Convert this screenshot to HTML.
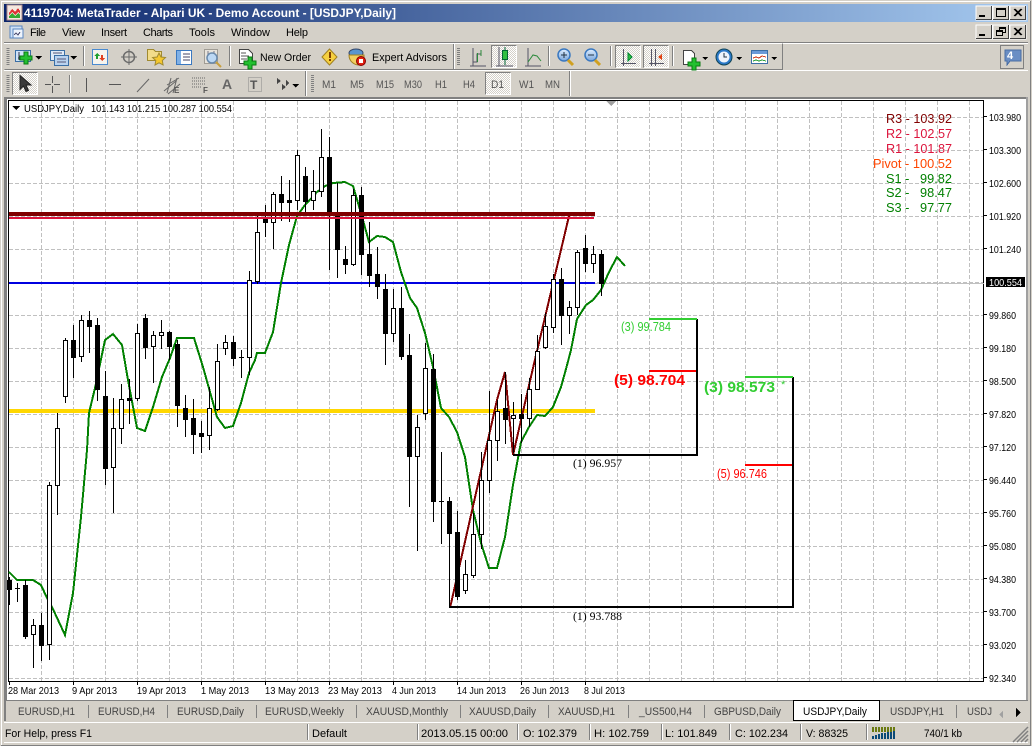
<!DOCTYPE html>
<html><head><meta charset="utf-8"><title>MetaTrader</title>
<style>
html,body{margin:0;padding:0;width:1032px;height:746px;overflow:hidden;background:#d4d0c8}
svg{display:block}
text{font-family:"Liberation Sans",sans-serif;font-size:11px;fill:#000;white-space:pre}
.s{fill:#444}
.y{font-family:"Liberation Serif",serif;font-size:12px}
.p{font-size:13px}
.b{font-size:14.5px;font-weight:bold}
.g{font-size:11px;fill:#555}
.t{font-size:10.5px}
</style></head><body>
<svg width="1032" height="746" viewBox="0 0 1032 746" xmlns="http://www.w3.org/2000/svg">
<defs>
<linearGradient id="tb" x1="0" x2="1" y1="0" y2="0"><stop offset="0" stop-color="#0a246a"/><stop offset="1" stop-color="#a6caf0"/></linearGradient>
<pattern id="ck" width="2" height="2" patternUnits="userSpaceOnUse"><rect width="2" height="2" fill="#fff"/><rect width="1" height="1" fill="#d4d0c8"/><rect x="1" y="1" width="1" height="1" fill="#d4d0c8"/></pattern>
<linearGradient id="bl" x1="0" x2="0" y1="0" y2="1"><stop offset="0" stop-color="#dfeeff"/><stop offset="1" stop-color="#7aa6dc"/></linearGradient>
</defs>
<rect width="1032" height="746" fill="#d4d0c8"/>
<rect x="1" y="1" width="1030" height="1" fill="#fff"/>
<rect x="1" y="1" width="1" height="744" fill="#fff"/>
<rect x="1030" y="1" width="1" height="744" fill="#808080"/>
<rect x="1" y="745" width="1030" height="1" fill="#808080"/>
<!-- title -->
<rect x="4" y="4" width="1024" height="18" fill="url(#tb)"/>
<g shape-rendering="crispEdges">
<rect x="7" y="5" width="15" height="15" fill="#f4e8e0" stroke="#a88" stroke-width="1"/>
<path d="M9 13l3-4 3 3 3-4 2 3v3l-2-2-3 3-3-3-3 3z" fill="#d33"/><path d="M9 16l3-3 3 3 3-3 2 2v3H9z" fill="#3a3"/>
</g>
<text x="24" y="17" style="font-size:12px;font-weight:bold;fill:#fff" textLength="372" lengthAdjust="spacingAndGlyphs">4119704: MetaTrader - Alpari UK - Demo Account - [USDJPY,Daily]</text>
<g shape-rendering="crispEdges">
<rect x="976" y="6" width="16" height="14" fill="#d4d0c8" stroke="#fff"/><path d="M991.5 6v14M976 19.5h16" stroke="#404040" fill="none"/><rect x="979" y="15" width="6" height="2" fill="#000"/>
<rect x="993" y="6" width="16" height="14" fill="#d4d0c8" stroke="#fff"/><path d="M1008.5 6v14M993 19.5h16" stroke="#404040" fill="none"/><rect x="996.5" y="8.5" width="9" height="8" fill="none" stroke="#000"/><rect x="996" y="8" width="10" height="2" fill="#000"/>
<rect x="1010" y="6" width="16" height="14" fill="#d4d0c8" stroke="#fff"/><path d="M1025.5 6v14M1010 19.5h16" stroke="#404040" fill="none"/><path d="M1014 9l7 7m0-7l-7 7M1015 9l7 7m0-7l-7 7" stroke="#000" fill="none" shape-rendering="auto"/>
<rect x="976" y="25" width="16" height="14" fill="#d4d0c8" stroke="#fff"/><path d="M991.5 25v14M976 38.5h16" stroke="#404040" fill="none"/><rect x="979" y="34" width="6" height="2" fill="#000"/>
<rect x="993" y="25" width="16" height="14" fill="#d4d0c8" stroke="#fff"/><path d="M1008.5 25v14M993 38.5h16" stroke="#404040" fill="none"/><rect x="999.5" y="27.5" width="6" height="5" fill="none" stroke="#000"/><rect x="996.5" y="30.5" width="6" height="5" fill="#d4d0c8" stroke="#000"/><rect x="996" y="30" width="7" height="2" fill="#000"/><rect x="999" y="27" width="7" height="2" fill="#000"/>
<rect x="1010" y="25" width="16" height="14" fill="#d4d0c8" stroke="#fff"/><path d="M1025.5 25v14M1010 38.5h16" stroke="#404040" fill="none"/><path d="M1014 28l7 7m0-7l-7 7M1015 28l7 7m0-7l-7 7" stroke="#000" fill="none" shape-rendering="auto"/>
<!-- menu icon -->
<rect x="10" y="26" width="12" height="12" fill="#cfe0f5" stroke="#5a86c0"/><rect x="13" y="29" width="10" height="9" fill="#eef4fc" stroke="#5a86c0"/><path d="M14 35l2-2 2 2 2-3" stroke="#557" fill="none"/>
<rect x="4" y="42" width="1024" height="1" fill="#808080"/><rect x="4" y="43" width="1024" height="1" fill="#fff"/>
</g>
<text x="30" y="36" textLength="16">File</text>
<text x="62" y="36" textLength="23">View</text>
<text x="101" y="36" textLength="26">Insert</text>
<text x="143" y="36" textLength="30">Charts</text>
<text x="189" y="36" textLength="26">Tools</text>
<text x="231" y="36" textLength="39">Window</text>
<text x="286" y="36" textLength="22">Help</text>
<!-- toolbar frames -->
<g shape-rendering="crispEdges" fill="none">
<path d="M4.5 69.5H782.5V43.5" stroke="#808080"/><path d="M453.5 44V69" stroke="#808080"/><path d="M454.5 44V69" stroke="#fff"/>
<path d="M4 70.5H1028" stroke="#fff"/>
<path d="M305.5 71V96" stroke="#808080"/><path d="M306.5 71V96" stroke="#fff"/><path d="M569.5 71V96" stroke="#808080"/><path d="M570.5 71V96" stroke="#fff"/>
<path d="M8 48V66" stroke="#808080" stroke-dasharray="1 1" stroke-width="3"/>
<path d="M458.5 48V66" stroke="#808080" stroke-dasharray="1 1" stroke-width="3"/>
<path d="M8 75V93" stroke="#808080" stroke-dasharray="1 1" stroke-width="3"/>
<path d="M312.5 75V93" stroke="#808080" stroke-dasharray="1 1" stroke-width="3"/>
<path d="M83.5 46V66M229.5 46V66M548.5 46V66M610.5 46V66M672.5 46V66M69.5 75V93" stroke="#808080"/>
<path d="M84.5 46V66M230.5 46V66M549.5 46V66M611.5 46V66M673.5 46V66M70.5 75V93" stroke="#fff"/>
<!-- pressed -->
<rect x="491" y="45" width="26" height="23" fill="url(#ck)"/><path d="M491.500 67.500V45.500H516.500" stroke="#808080"/><path d="M516.500 46V67.500H492" stroke="#fff"/>
<rect x="615" y="45" width="26" height="23" fill="url(#ck)"/><path d="M615.500 67.500V45.500H640.500" stroke="#808080"/><path d="M640.500 46V67.500H616" stroke="#fff"/>
<rect x="643" y="45" width="26" height="23" fill="url(#ck)"/><path d="M643.500 67.500V45.500H668.500" stroke="#808080"/><path d="M668.500 46V67.500H644" stroke="#fff"/>
<rect x="12" y="72" width="26" height="23" fill="url(#ck)"/><path d="M12.500 94.500V72.500H37.500" stroke="#808080"/><path d="M37.500 73V94.500H13" stroke="#fff"/>
<rect x="485" y="72" width="26" height="23" fill="url(#ck)"/><path d="M485.500 94.500V72.500H510.500" stroke="#808080"/><path d="M510.500 73V94.500H486" stroke="#fff"/>
<!-- new chart -->
<rect x="15.5" y="50.5" width="15" height="11" fill="#cfe2f8" stroke="#3a6ea5"/>
<path d="M19 52v8M18 58h6" stroke="#334"/>
<path d="M24 52h4v4h4v4h-4v4h-4v-4h-4v-4h4z" fill="#22c030" stroke="#0a7a12"/>
<path d="M35 56h7l-3.5 3.5z" fill="#000" stroke="none"/>
<!-- profiles -->
<rect x="50.5" y="50.5" width="14" height="10" fill="#dfeaf7" stroke="#3a6ea5"/>
<rect x="54.5" y="55.5" width="14" height="10" fill="#b9d2ef" stroke="#3a6ea5"/>
<path d="M53 53h9M57 59h9M57 62h9" stroke="#557"/>
<path d="M70 56h7l-3.5 3.500z" fill="#000" stroke="none"/>
<!-- market watch -->
<rect x="92.5" y="49.5" width="15" height="15" fill="#f6f4ee" stroke="#4a8ad0"/>
<path d="M97 53l-3 3h2v3h2v-3h2z" fill="#20a030" stroke="none"/><path d="M102 61l3-3h-2v-3h-2v3h-2z" fill="#e04020" stroke="none"/>
<!-- crosshair -->
<circle cx="129" cy="57" r="5.5" stroke="#6a6a6a" stroke-width="1.5" shape-rendering="auto"/>
<path d="M129 49v16M121 57h16" stroke="#6a6a6a"/>
<!-- folder star -->
<path d="M147.5 49.5h6l2 2h6v9h-14z" fill="#f2dc8a" stroke="#a08a30"/>
<path d="M159 53l2 4 4.500 .5-3.200 3 .8 4.500-4.100-2.200-4 2.200 .8-4.500-3.200-3 4.500-.5z" fill="#f5c830" stroke="#a08a30" shape-rendering="auto"/>
<!-- navigator -->
<rect x="176.500" y="50.500" width="15" height="14" fill="#fff" stroke="#3a78c0"/><rect x="177" y="51" width="4" height="13" fill="#7fb0e6"/><path d="M183 54h7M183 57h7M183 60h7" stroke="#446"/>
<!-- tester -->
<rect x="204.500" y="49.500" width="13" height="14" fill="#e8e4dc" stroke="#a09c94"/><path d="M208 51v10M211 53v6M214 51v8" stroke="#778"/>
<circle cx="212" cy="58" r="5" fill="#bcd8f4" stroke="#6a8aac" stroke-width="1.500" shape-rendering="auto"/><path d="M216 62l5 5" stroke="#c8a040" stroke-width="2" shape-rendering="auto"/>
<!-- new order -->
<path d="M239.500 49.500h9l4 4v10h-13z" fill="#fff" stroke="#444"/><path d="M241 53h5M241 56h8M241 59h6" stroke="#555"/>
<path d="M248 57h4v4h4v4h-4v4h-4v-4h-4v-4h4z" fill="#22c030" stroke="#0a7a12"/>
<!-- warning -->
<path d="M329.500 49l7.500 8-7.500 8-7.500-8z" fill="#f6d040" stroke="#a08020" shape-rendering="auto"/><rect x="329" y="52" width="2" height="6" fill="#804000"/><rect x="329" y="59" width="2" height="2" fill="#804000"/>
<!-- EA hat -->
<ellipse cx="356" cy="53" rx="7" ry="4" fill="#5a96d0" stroke="#346" shape-rendering="auto"/><path d="M349 55c0 7 6 10 10 10l5-3v-7z" fill="#f2d060" stroke="#a08020" shape-rendering="auto"/>
<circle cx="361" cy="61" r="4.500" fill="#e02010" stroke="#800" shape-rendering="auto"/><rect x="359" y="59" width="4" height="4" fill="#fff"/>
<!-- chart types -->
<path d="M470 66h16M473 48v18M473 62h4v-8h4v-4" stroke="#556" /><path d="M477.500 62v-9M481 50v6" stroke="#2a8a3a"/>
<path d="M496 66h17M499 47v19" stroke="#556"/><path d="M505 47v18" stroke="#063"/><rect x="502.500" y="50.500" width="5" height="9" fill="#30c040" stroke="#063"/>
<path d="M525 66h16M528 48v18" stroke="#556"/><path d="M528 62l5-7 4 1 4 5" stroke="#2a8a3a" shape-rendering="auto"/>
<!-- zoom in/out -->
<circle cx="564" cy="55" r="6" fill="url(#bl)" stroke="#3a78c0" stroke-width="1.500" shape-rendering="auto"/><path d="M561 55h6M564 52v6" stroke="#234"/><path d="M568 60l5 5" stroke="#d0a020" stroke-width="3" shape-rendering="auto"/>
<circle cx="591" cy="55" r="6" fill="url(#bl)" stroke="#3a78c0" stroke-width="1.500" shape-rendering="auto"/><path d="M588 55h6" stroke="#234"/><path d="M595 60l5 5" stroke="#d0a020" stroke-width="3" shape-rendering="auto"/>
<!-- shift / autoscroll -->
<path d="M621 63.500h15M623.500 49v17" stroke="#556"/><path d="M628 53l4 4-4 4z" fill="#30c040" stroke="#083"/>
<path d="M649 63.500h15M651.500 49v17M655.500 49v17" stroke="#556"/><path d="M658 57l4-3v6z" fill="#e04010" stroke="none"/>
<!-- indicators -->
<path d="M683.500 50.500h8l3 3v11h-11z" fill="#fff" stroke="#444"/>
<path d="M692 58h4v4h4v4h-4v4h-4v-4h-4v-4h4z" fill="#22c030" stroke="#0a7a12"/>
<path d="M702 57h6l-3 3z" fill="#000" stroke="none"/>
<circle cx="724" cy="57" r="8" fill="#2a78c8" stroke="#145" shape-rendering="auto"/><circle cx="724" cy="57" r="5.500" fill="#eef4fc" shape-rendering="auto"/><path d="M724 53v4h3" stroke="#234"/>
<path d="M736 57h6l-3 3z" fill="#000" stroke="none"/>
<rect x="751.500" y="50.500" width="16" height="13" fill="#fff" stroke="#3a6ea5"/><rect x="752" y="51" width="15" height="3" fill="#6a9ad8"/><path d="M753 58l3-1 3 1 3-2 4 1" stroke="#d04020"/><path d="M753 61l3-1 3 1 3-1 4 1" stroke="#30a040"/>
<path d="M771 57h6l-3 3z" fill="#000" stroke="none"/>
<!-- cursor -->
<path d="M20 75.500v14l3.500-3.500 2.500 5.500 2.500-1-2.500-5.500h5z" fill="#3a3a3a" stroke="#222" shape-rendering="auto"/>
<path d="M52.500 76v7M52.500 86v7M45 84.500h6M54 84.500h6" stroke="#555"/>
<path d="M86.500 78v14" stroke="#555"/><path d="M109 84.500h12" stroke="#555"/>
<path d="M137 92l12-13" stroke="#666" shape-rendering="auto"/>
<path d="M164 91l12-10M167 85l12-7M168 94l12-10M171 78l-4 15M177 78l-4 15" stroke="#666" shape-rendering="auto"/>
<path d="M192 78h14M192 81h14M192 84h14M192 87h10" stroke="#666" stroke-dasharray="1 1"/>
<rect x="248.500" y="77.500" width="13" height="14" stroke="#888" stroke-dasharray="1 1"/>
<path d="M277 78l4 3-4 3zM282 84l4 3-4 3z" fill="#444" stroke="none"/><path d="M286 80l3 3-3 3z" fill="#444" stroke="none"/>
<path d="M292 84h7l-3.500 3.500z" fill="#000" stroke="none"/>
<!-- chat icon box -->
<rect x="1000.500" y="45.500" width="23" height="23" fill="#d4d0c8" stroke="#808080"/>
<path d="M1005 50h16v11h-11l-3 4v-4h-2z" fill="#6a8ec4" stroke="#4a6ea4"/>
</g>
<text x="260" y="61" textLength="51" lengthAdjust="spacingAndGlyphs">New Order</text>
<text x="372" y="61" textLength="75" lengthAdjust="spacingAndGlyphs">Expert Advisors</text>
<text x="203" y="93" class="g" style="font-size:8px;font-weight:bold" textLength="5">F</text>
<text x="174" y="93" class="g" style="font-size:8px;font-weight:bold" textLength="5">E</text>
<text x="222" y="89" style="font-size:14px;font-weight:bold;fill:#666" textLength="10">A</text>
<text x="250" y="89" style="font-size:12px;font-weight:bold;fill:#555" textLength="9">T</text>
<text x="322" y="88" class="g" textLength="14" lengthAdjust="spacingAndGlyphs">M1</text>
<text x="350" y="88" class="g" textLength="14" lengthAdjust="spacingAndGlyphs">M5</text>
<text x="376" y="88" class="g" textLength="18" lengthAdjust="spacingAndGlyphs">M15</text>
<text x="404" y="88" class="g" textLength="18" lengthAdjust="spacingAndGlyphs">M30</text>
<text x="435" y="88" class="g" textLength="12" lengthAdjust="spacingAndGlyphs">H1</text>
<text x="463" y="88" class="g" textLength="12" lengthAdjust="spacingAndGlyphs">H4</text>
<text x="491" y="88" class="g" textLength="13" lengthAdjust="spacingAndGlyphs">D1</text>
<text x="519" y="88" class="g" textLength="15" lengthAdjust="spacingAndGlyphs">W1</text>
<text x="545" y="88" class="g" textLength="15" lengthAdjust="spacingAndGlyphs">MN</text>
<text x="1007" y="59" style="font-size:11px;font-weight:bold;fill:#fff" textLength="7">4</text>
<!-- chart frame -->
<g shape-rendering="crispEdges">
<rect x="4" y="97" width="1024" height="2" fill="#808080"/>
<rect x="4" y="97" width="3" height="603" fill="#808080"/>
<rect x="1026" y="97" width="2" height="603" fill="#a0a0a0"/>
<rect x="7" y="99" width="1019" height="601" fill="#fff"/>
<path d="M8.500 100.500H983.500V681.500H8.500z" fill="none" stroke="#000"/>
<!-- grid -->
<path d="M41.500 101V681M73.500 101V681M105.500 101V681M137.500 101V681M169.500 101V681M201.500 101V681M233.500 101V681M265.500 101V681M297.500 101V681M329.500 101V681M361.500 101V681M393.500 101V681M425.500 101V681M457.500 101V681M489.500 101V681M521.500 101V681M553.500 101V681M585.500 101V681M617.500 101V681M649.500 101V681M681.500 101V681M713.500 101V681M745.500 101V681M777.500 101V681M809.500 101V681M841.500 101V681M873.500 101V681M905.500 101V681M937.500 101V681M969.500 101V681" stroke="#c0c0c0" stroke-dasharray="4 2" fill="none"/>
<path d="M9 117.500H983M9 150.500H983M9 183.500H983M9 216.500H983M9 249.500H983M9 282.500H983M9 315.500H983M9 348.500H983M9 381.500H983M9 414.500H983M9 447.500H983M9 480.500H983M9 513.500H983M9 546.500H983M9 579.500H983M9 612.500H983M9 645.500H983M9 678.500H983" stroke="#c0c0c0" stroke-dasharray="4 2" fill="none"/>
<!-- shift marker -->
<path d="M606 101h10l-5 5z" fill="#a0a0a0"/>
<!-- price line -->
<rect x="595" y="283" width="389" height="1" fill="#c0c0c0"/>
<!-- hlines under candles -->
<rect x="9" y="282" width="586" height="2" fill="#0000e0"/>
<rect x="9" y="409" width="586" height="4" fill="#ffd700"/>
<!-- MA -->
<path d="M9 572L17 580H33L41 585L47 598L52 607L65 635L73 593L81 517L87 450L89 413L95 388L105 340L113 334L122 345L128 380L137 428L145 431L153 407L162 377L170 358L177 338H194L203 367L217 417L225 428L233 426L241 403L249 373L255 360L257 353H265L273 332L281 283L289 245L297 216L305 205L317 192L325 186L333 183L345 182L353 186L361 213L369 242L377 236L385 237L393 242L401 272L410 298L417 308L425 333L433 367L441 408L449 417L457 432L465 457L473 510L481 543L489 568H497L505 537L513 485L521 442L529 427L537 415L545 416L553 407L561 387L566 369L571 350L577 319L586 305L593 300L601 290L609 272L617 257L625 266" fill="none" stroke="#008000" stroke-width="2"/>
<!-- zigzag -->
<path d="M450 608L497 400L505 372L513 455L533 368L569 216" fill="none" stroke="#800000" stroke-width="2"/>
<!-- wicks -->
<path d="M9.500 577V605M17.500 583V602M25.500 580V639M33.500 619V668M41.500 613V661M49.500 482V660M57.500 413V515M65.500 338V403M73.500 325V378M81.500 315V362M89.500 311V353M97.500 318V401M105.500 371V485M113.500 398V513M121.500 384V444M129.500 379V424M137.500 324V401M145.500 314V359M153.500 331V383M161.500 320V349M169.500 331V360M177.500 340V427M185.500 395V437M193.500 399V454M201.500 421V453M209.500 387V450M217.500 344V411M225.500 335V355M233.500 336V366M241.500 350V378M249.500 271V375M257.500 213V284M265.500 205V237M273.500 192V249M281.500 176V221M289.500 180V222M297.500 150V210M305.500 167V212M313.500 170V210M321.500 129V197M329.500 137V270M337.500 183V278M345.500 246V274M353.500 189V266M361.500 187V275M369.500 222V287M377.500 247V299M385.500 274V365M393.500 289V342M401.500 287V360M409.500 334V507M417.500 415V551M425.500 343V420M433.500 354V522M441.500 452V544M449.500 497V608M457.500 511V600M465.500 560V594M473.500 513V578M481.500 452V549M489.500 391V493M497.500 400V461M505.500 372V444M513.500 402V453M521.500 394V443M529.500 378V427M537.500 335V389M545.500 313V349M553.500 274V333M561.500 268V345M569.500 301V334M577.500 250V315M585.500 235V272M593.500 246V273M601.500 250V296" stroke="#000" fill="none"/>
<!-- bear bodies -->
<path fill="#000" d="M7 580h5v10h-5zM15 588h5v1h-5zM23 585h5v52h-5zM39 625h5v21h-5zM71 340h5v18h-5zM87 320h5v7h-5zM95 325h5v65h-5zM103 396h5v73h-5zM127 398h5v3h-5zM143 318h5v30h-5zM167 332h5v15h-5zM175 344h5v62h-5zM183 408h5v12h-5zM191 418h5v17h-5zM199 433h5v4h-5zM231 342h5v17h-5zM239 357h5v1h-5zM263 218h5v5h-5zM279 194h5v9h-5zM287 200h5v3h-5zM303 176h5v26h-5zM327 157h5v57h-5zM335 213h5v37h-5zM343 259h5v6h-5zM359 195h5v60h-5zM367 254h5v22h-5zM375 274h5v13h-5zM383 289h5v45h-5zM399 308h5v49h-5zM407 355h5v102h-5zM431 369h5v133h-5zM439 501h5v1h-5zM447 501h5v33h-5zM455 532h5v65h-5zM503 408h5v12h-5zM519 414h5v5h-5zM559 279h5v37h-5zM583 248h5v16h-5zM599 254h5v30h-5z"/>
<!-- bull bodies -->
<path fill="#fff" stroke="#000" d="M31.500 625.500h4v9h-4zM47.500 485.500h4v159h-4zM55.500 428.500h4v57h-4zM63.500 340.500h4v56h-4zM79.500 320.500h4v36h-4zM111.500 428.500h4v39h-4zM119.500 399.500h4v29h-4zM135.500 333.500h4v65h-4zM151.500 335.500h4v11h-4zM159.500 332.500h4v3h-4zM207.500 408.500h4v27h-4zM215.500 361.500h4v48h-4zM223.500 342.500h4v6h-4zM247.500 280.500h4v77h-4zM255.500 232.500h4v49h-4zM271.500 194.500h4v28h-4zM295.500 155.500h4v45h-4zM311.500 191.500h4v9h-4zM319.500 157.500h4v34h-4zM351.500 195.500h4v69h-4zM391.500 308.500h4v25h-4zM415.500 427.500h4v29h-4zM423.500 368.500h4v45h-4zM463.500 574.500h4v16h-4zM471.500 534.500h4v41h-4zM479.500 480.500h4v54h-4zM487.500 440.500h4v40h-4zM495.500 411.500h4v29h-4zM511.500 415.500h4v3h-4zM527.500 389.500h4v29h-4zM535.500 351.500h4v38h-4zM543.500 326.500h4v21h-4zM551.500 279.500h4v48h-4zM567.500 307.500h4v8h-4zM575.500 252.500h4v55h-4zM591.500 254.500h4v9h-4z"/>
<!-- red lines on top -->
<rect x="9" y="212" width="586" height="4" fill="#800000"/>
<rect x="9" y="217" width="585" height="2" fill="#dc143c"/>
<!-- projection lines -->
<path d="M513 454h185v2H513zM696 319h2v137h-2zM450 606h344v2H450zM792 377h2v231h-2z" fill="#000"/>
<rect x="649" y="318" width="48" height="2" fill="#32cd32"/>
<rect x="649" y="370" width="47" height="2" fill="#ff0000"/>
<rect x="745" y="376" width="48" height="2" fill="#32cd32"/>
<rect x="745" y="464" width="47" height="2" fill="#ff0000"/>
<!-- ticks -->
<path d="M984 116.500h3M984 149.500h3M984 182.500h3M984 215.500h3M984 248.500h3M984 314.500h3M984 347.500h3M984 380.500h3M984 413.500h3M984 446.500h3M984 479.500h3M984 512.500h3M984 545.500h3M984 578.500h3M984 611.500h3M984 644.500h3M984 677.500h3" stroke="#000"/>
<path d="M9.500 682v3M73.500 682v3M137.500 682v3M201.500 682v3M265.500 682v3M329.500 682v3M393.500 682v3M457.500 682v3M521.500 682v3M585.500 682v3" stroke="#000"/>
<rect x="986" y="277" width="39" height="10" fill="#000"/>
<path d="M12 106h8l-4 4z" fill="#000"/>
</g>
<text x="24" y="112" class="t" textLength="60" lengthAdjust="spacingAndGlyphs">USDJPY,Daily</text>
<text x="91" y="112" class="t" textLength="141" lengthAdjust="spacingAndGlyphs">101.143 101.215 100.287 100.554</text>
<!-- price labels -->
<g>
<text class="t" x="989" y="121" textLength="32" lengthAdjust="spacingAndGlyphs">103.980</text>
<text class="t" x="989" y="154" textLength="32" lengthAdjust="spacingAndGlyphs">103.300</text>
<text class="t" x="989" y="187" textLength="32" lengthAdjust="spacingAndGlyphs">102.600</text>
<text class="t" x="989" y="220" textLength="32" lengthAdjust="spacingAndGlyphs">101.920</text>
<text class="t" x="989" y="253" textLength="32" lengthAdjust="spacingAndGlyphs">101.240</text>
<text class="t" x="989" y="286" textLength="33" lengthAdjust="spacingAndGlyphs" style="fill:#fff">100.554</text>
<text class="t" x="989" y="319" textLength="27" lengthAdjust="spacingAndGlyphs">99.860</text>
<text class="t" x="989" y="352" textLength="27" lengthAdjust="spacingAndGlyphs">99.180</text>
<text class="t" x="989" y="385" textLength="27" lengthAdjust="spacingAndGlyphs">98.500</text>
<text class="t" x="989" y="418" textLength="27" lengthAdjust="spacingAndGlyphs">97.820</text>
<text class="t" x="989" y="451" textLength="27" lengthAdjust="spacingAndGlyphs">97.120</text>
<text class="t" x="989" y="484" textLength="27" lengthAdjust="spacingAndGlyphs">96.440</text>
<text class="t" x="989" y="517" textLength="27" lengthAdjust="spacingAndGlyphs">95.760</text>
<text class="t" x="989" y="550" textLength="27" lengthAdjust="spacingAndGlyphs">95.080</text>
<text class="t" x="989" y="583" textLength="27" lengthAdjust="spacingAndGlyphs">94.380</text>
<text class="t" x="989" y="616" textLength="27" lengthAdjust="spacingAndGlyphs">93.700</text>
<text class="t" x="989" y="649" textLength="27" lengthAdjust="spacingAndGlyphs">93.020</text>
<text class="t" x="989" y="682" textLength="27" lengthAdjust="spacingAndGlyphs">92.340</text>
</g>
<!-- date labels -->
<text class="t" x="8" y="694" textLength="51" lengthAdjust="spacingAndGlyphs">28 Mar 2013</text>
<text class="t" x="72" y="694" textLength="45" lengthAdjust="spacingAndGlyphs">9 Apr 2013</text>
<text class="t" x="137" y="694" textLength="49" lengthAdjust="spacingAndGlyphs">19 Apr 2013</text>
<text class="t" x="201" y="694" textLength="48" lengthAdjust="spacingAndGlyphs">1 May 2013</text>
<text class="t" x="265" y="694" textLength="54" lengthAdjust="spacingAndGlyphs">13 May 2013</text>
<text class="t" x="328" y="694" textLength="54" lengthAdjust="spacingAndGlyphs">23 May 2013</text>
<text class="t" x="392" y="694" textLength="44" lengthAdjust="spacingAndGlyphs">4 Jun 2013</text>
<text class="t" x="457" y="694" textLength="49" lengthAdjust="spacingAndGlyphs">14 Jun 2013</text>
<text class="t" x="520" y="694" textLength="49" lengthAdjust="spacingAndGlyphs">26 Jun 2013</text>
<text class="t" x="584" y="694" textLength="41" lengthAdjust="spacingAndGlyphs">8 Jul 2013</text>
<!-- pivots -->
<text x="886" y="123" class="p" style="fill:#800000" textLength="66" lengthAdjust="spacingAndGlyphs">R3 - 103.92</text>
<text x="886" y="138" class="p" style="fill:#dc143c" textLength="66" lengthAdjust="spacingAndGlyphs">R2 - 102.57</text>
<text x="886" y="153" class="p" style="fill:#dc143c" textLength="66" lengthAdjust="spacingAndGlyphs">R1 - 101.87</text>
<text x="873" y="168" class="p" style="fill:#ff4500" textLength="79" lengthAdjust="spacingAndGlyphs">Pivot - 100.52</text>
<text x="886" y="183" class="p" style="fill:#008000" textLength="66" lengthAdjust="spacingAndGlyphs">S1 -   99.82</text>
<text x="886" y="197" class="p" style="fill:#008000" textLength="66" lengthAdjust="spacingAndGlyphs">S2 -   98.47</text>
<text x="886" y="212" class="p" style="fill:#008000" textLength="66" lengthAdjust="spacingAndGlyphs">S3 -   97.77</text>
<!-- fib labels -->
<text x="621" y="331" style="font-size:13px;fill:#32cd32" textLength="50" lengthAdjust="spacingAndGlyphs">(3) 99.784</text>
<text x="614" y="385" class="b" style="fill:#ff0000" textLength="71" lengthAdjust="spacingAndGlyphs">(5) 98.704</text>
<text x="704" y="392" class="b" style="fill:#32cd32" textLength="71" lengthAdjust="spacingAndGlyphs">(3) 98.573</text>
<text x="781" y="388" style="fill:#32cd32">*</text>
<text x="717" y="478" style="font-size:13px;fill:#ff0000" textLength="50" lengthAdjust="spacingAndGlyphs">(5) 96.746</text>
<text x="573" y="467" class="y" textLength="49" lengthAdjust="spacingAndGlyphs">(1) 96.957</text>
<text x="573" y="620" class="y" textLength="49" lengthAdjust="spacingAndGlyphs">(1) 93.788</text>
<!-- tabs -->
<g shape-rendering="crispEdges">
<rect x="4" y="700" width="1024" height="1" fill="#808080"/>
<rect x="4" y="701" width="2" height="20" fill="#808080"/>
<rect x="793" y="701" width="87" height="19" fill="#fff"/>
<path d="M793.500 701V720M879.500 701V720.500H793" fill="none" stroke="#000"/>
<path d="M793 700.500H880" stroke="#000"/>
<path d="M88.500 705v13M167.500 705v13M256.500 705v13M356.500 705v13M460.500 705v13M548.500 705v13M628.500 705v13M704.500 705v13M956.500 705v13" stroke="#808080"/>
<path d="M1003 711l-4 3.500 4 3.500z" fill="#a0a0a0"/><path d="M1016 708l5 4.500-5 4.500z" fill="#000"/>
<rect x="4" y="722" width="1024" height="1" fill="#fff"/>
<rect x="4" y="742" width="1024" height="1" fill="#fff"/>
<path d="M307.500 724v16M417.500 724v16M517.500 724v16M589.500 724v16M661.500 724v16M729.500 724v16M800.500 724v16M866.500 724v16" stroke="#808080"/>
<path d="M308.500 724v16M418.500 724v16M518.500 724v16M590.500 724v16M662.500 724v16M730.500 724v16M801.500 724v16M867.500 724v16" stroke="#fff"/>
<!-- connection -->
<path d="M872 727h2v5h-2zM875 727h2v5h-2zM878 727h2v5h-2zM881 727h2v5h-2zM884 727h2v5h-2zM887 727h2v5h-2zM890 727h2v5h-2zM893 727h2v5h-2z" fill="#6a7a10"/>
<path d="M872 736h2v3h-2zM875 735h2v4h-2zM878 734h2v5h-2zM881 733h2v6h-2zM884 733h2v6h-2zM887 732h2v7h-2zM890 732h2v7h-2zM893 731h2v8h-2z" fill="#0a4a78"/>
<path d="M1013 742l15-15M1017 742l11-11M1021 742l7-7M1025 742l3-3" stroke="#808080" stroke-width="1.500" shape-rendering="auto"/>
</g>
<g>
<text x="18" y="715" class="s" textLength="57" lengthAdjust="spacingAndGlyphs">EURUSD,H1</text>
<text x="98" y="715" class="s" textLength="57" lengthAdjust="spacingAndGlyphs">EURUSD,H4</text>
<text x="177" y="715" class="s" textLength="67" lengthAdjust="spacingAndGlyphs">EURUSD,Daily</text>
<text x="265" y="715" class="s" textLength="79" lengthAdjust="spacingAndGlyphs">EURUSD,Weekly</text>
<text x="366" y="715" class="s" textLength="82" lengthAdjust="spacingAndGlyphs">XAUUSD,Monthly</text>
<text x="469" y="715" class="s" textLength="67" lengthAdjust="spacingAndGlyphs">XAUUSD,Daily</text>
<text x="558" y="715" class="s" textLength="57" lengthAdjust="spacingAndGlyphs">XAUUSD,H1</text>
<text x="639" y="715" class="s" textLength="53" lengthAdjust="spacingAndGlyphs">_US500,H4</text>
<text x="714" y="715" class="s" textLength="67" lengthAdjust="spacingAndGlyphs">GBPUSD,Daily</text>
<text x="803" y="715" textLength="64" lengthAdjust="spacingAndGlyphs">USDJPY,Daily</text>
<text x="890" y="715" class="s" textLength="54" lengthAdjust="spacingAndGlyphs">USDJPY,H1</text>
<text x="967" y="715" class="s" textLength="25" lengthAdjust="spacingAndGlyphs">USDJ</text>
</g>
<text x="5" y="737" textLength="87" lengthAdjust="spacingAndGlyphs">For Help, press F1</text>
<text x="312" y="737" textLength="35" lengthAdjust="spacingAndGlyphs">Default</text>
<text x="421" y="737" textLength="87" lengthAdjust="spacingAndGlyphs">2013.05.15 00:00</text>
<text x="523" y="737" textLength="54" lengthAdjust="spacingAndGlyphs">O: 102.379</text>
<text x="594" y="737" textLength="55" lengthAdjust="spacingAndGlyphs">H: 102.759</text>
<text x="665" y="737" textLength="52" lengthAdjust="spacingAndGlyphs">L: 101.849</text>
<text x="735" y="737" textLength="53" lengthAdjust="spacingAndGlyphs">C: 102.234</text>
<text x="806" y="737" textLength="42" lengthAdjust="spacingAndGlyphs">V: 88325</text>
<text x="924" y="737" textLength="38" lengthAdjust="spacingAndGlyphs">740/1 kb</text>
</svg>
</body></html>
